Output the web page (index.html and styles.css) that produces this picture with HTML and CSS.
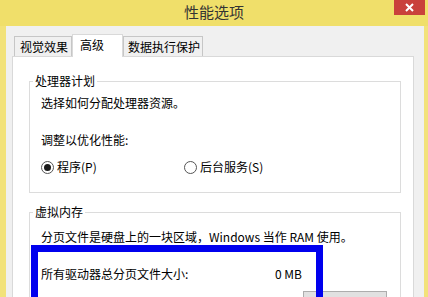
FILE: index.html
```html
<!DOCTYPE html>
<html lang="zh-CN">
<head>
  <meta charset="UTF-8" />
  <title>性能选项</title>
  <link rel="stylesheet" href="styles.css">
</head>
<body>

  <div class="window">
    <header class="titlebar">
      <span></span>
      <h1 class="title">性能选项</h1>
      <button class="close">
        <svg width="9" height="9" viewBox="0 0 9 9"><path d="M1 1L8 8M8 1L1 8" stroke="#fff" stroke-width="2" /></svg>
      </button>
    </header>

    <div class="frame">
      <div class="dialog">
        <div class="tabs">
          <div class="tab tab-visual">视觉效果</div>
          <div class="tab tab-advanced active">高级</div>
          <div class="tab tab-dep">数据执行保护</div>
        </div>

        <div class="panel">
          <fieldset class="group group-cpu">
            <legend>处理器计划</legend>
            <p class="desc">选择如何分配处理器资源。</p>
            <p class="prompt">调整以优化性能:</p>
            <div class="radios">
              <label class="radio radio-first"><span class="dot checked"></span>程序(P)</label>
              <label class="radio"><span class="dot"></span>后台服务(S)</label>
            </div>
          </fieldset>

          <fieldset class="group group-memory">
            <legend>虚拟内存</legend>
            <p class="desc">分页文件是硬盘上的一块区域，Windows 当作 RAM 使用。</p>
            <div class="paging">
              <div class="total">
                <span>所有驱动器总分页文件大小:</span>
                <span>0 MB</span>
              </div>
              <button class="change" aria-label="更改"></button>
              <div class="highlight"></div>
            </div>
          </fieldset>
        </div>
      </div>
    </div>
  </div>

</body>
</html>
```

FILE: styles.css
```css
body {
  margin: 0;
  width: 428px;
  height: 297px;
  overflow: hidden;
  background: #f2e27a;
  font-family: "Noto Sans CJK SC", "DejaVu Sans", sans-serif;
  font-size: 12px;
  line-height: 16px;
  color: #000;
}

.window {
  height: 297px;
  display: flex;
  flex-direction: column;
}

.titlebar {
  height: 26px;
  flex: none;
  display: grid;
  grid-template-columns: 1fr auto 1fr;
  background: #f0df6a;
}

.title {
  margin: 0;
  font-size: 15px;
  font-weight: normal;
  line-height: 24px;
  color: #333;
}

.close {
  justify-self: end;
  align-self: start;
  width: 31px;
  height: 15px;
  margin-right: 3px;
  padding: 0;
  border: none;
  background: #c9413b;
  display: flex;
  align-items: center;
  justify-content: center;
}

.frame {
  flex: 1;
  display: flex;
  padding: 0 4px 0 6px;
}

.dialog {
  flex: 1;
  background: #f0f0f0;
  padding: 8px 10px 0 6px;
  display: flex;
  flex-direction: column;
}

.tabs {
  display: flex;
  align-items: flex-end;
  margin-left: 2px;
  height: 22px;
  flex: none;
}

.tab {
  box-sizing: border-box;
  height: 20px;
  line-height: 19px;
  border: 1px solid #c6c6c6;
  border-bottom: none;
  background: #f0f0f0;
  padding-left: 5px;
}

.tab-visual {
  width: 58px;
}

.tab-advanced {
  width: 51px;
}

.tab-dep {
  width: 80px;
  padding-left: 4px;
}

.tab.active {
  height: 23px;
  margin-bottom: -1px;
  line-height: 19px;
  padding-left: 7px;
  background: #fff;
  border-color: #d9d9d9;
  position: relative;
  z-index: 1;
}

.panel {
  flex: 1;
  background: #fff;
  border: 1px solid #d9d9d9;
  border-bottom: none;
}

.group {
  margin: 16px 12px 0 16px;
  padding: 0 0 0 11px;
  border: 1px solid #dcdcdc;
}

.group legend {
  margin-left: -8px;
  padding: 0 2px;
}

.desc,
.prompt {
  margin: 0;
}

.group-cpu {
  padding-bottom: 17px;
}

.group-cpu .desc {
  margin-top: 6px;
}

.prompt {
  margin-top: 21px;
}

.radios {
  display: flex;
  margin-top: 11px;
}

.radio {
  display: flex;
  align-items: center;
}

.radio-first {
  width: 143px;
}

.dot {
  box-sizing: border-box;
  width: 13px;
  height: 13px;
  border: 1px solid #555;
  border-radius: 50%;
  margin-right: 3px;
  display: flex;
  align-items: center;
  justify-content: center;
}

.dot.checked::after {
  content: "";
  width: 7px;
  height: 7px;
  border-radius: 50%;
  background: #1a1a1a;
}

.group-memory {
  margin-top: 11px;
  height: 120px;
}

.group-memory .desc {
  margin-top: 9px;
}

.paging {
  position: relative;
  margin-top: 7px;
}

.total {
  width: 261px;
  padding-top: 14px;
  display: flex;
  justify-content: space-between;
}

.change {
  display: block;
  margin: 9px 0 0 262px;
  width: 84px;
  height: 23px;
  border: 1px solid #adadad;
  background: #e1e1e1;
  font: inherit;
}

.highlight {
  position: absolute;
  top: -7px;
  left: -10px;
  width: 292px;
  height: 80px;
  box-sizing: border-box;
  border: 7px solid #0000ee;
}
```
